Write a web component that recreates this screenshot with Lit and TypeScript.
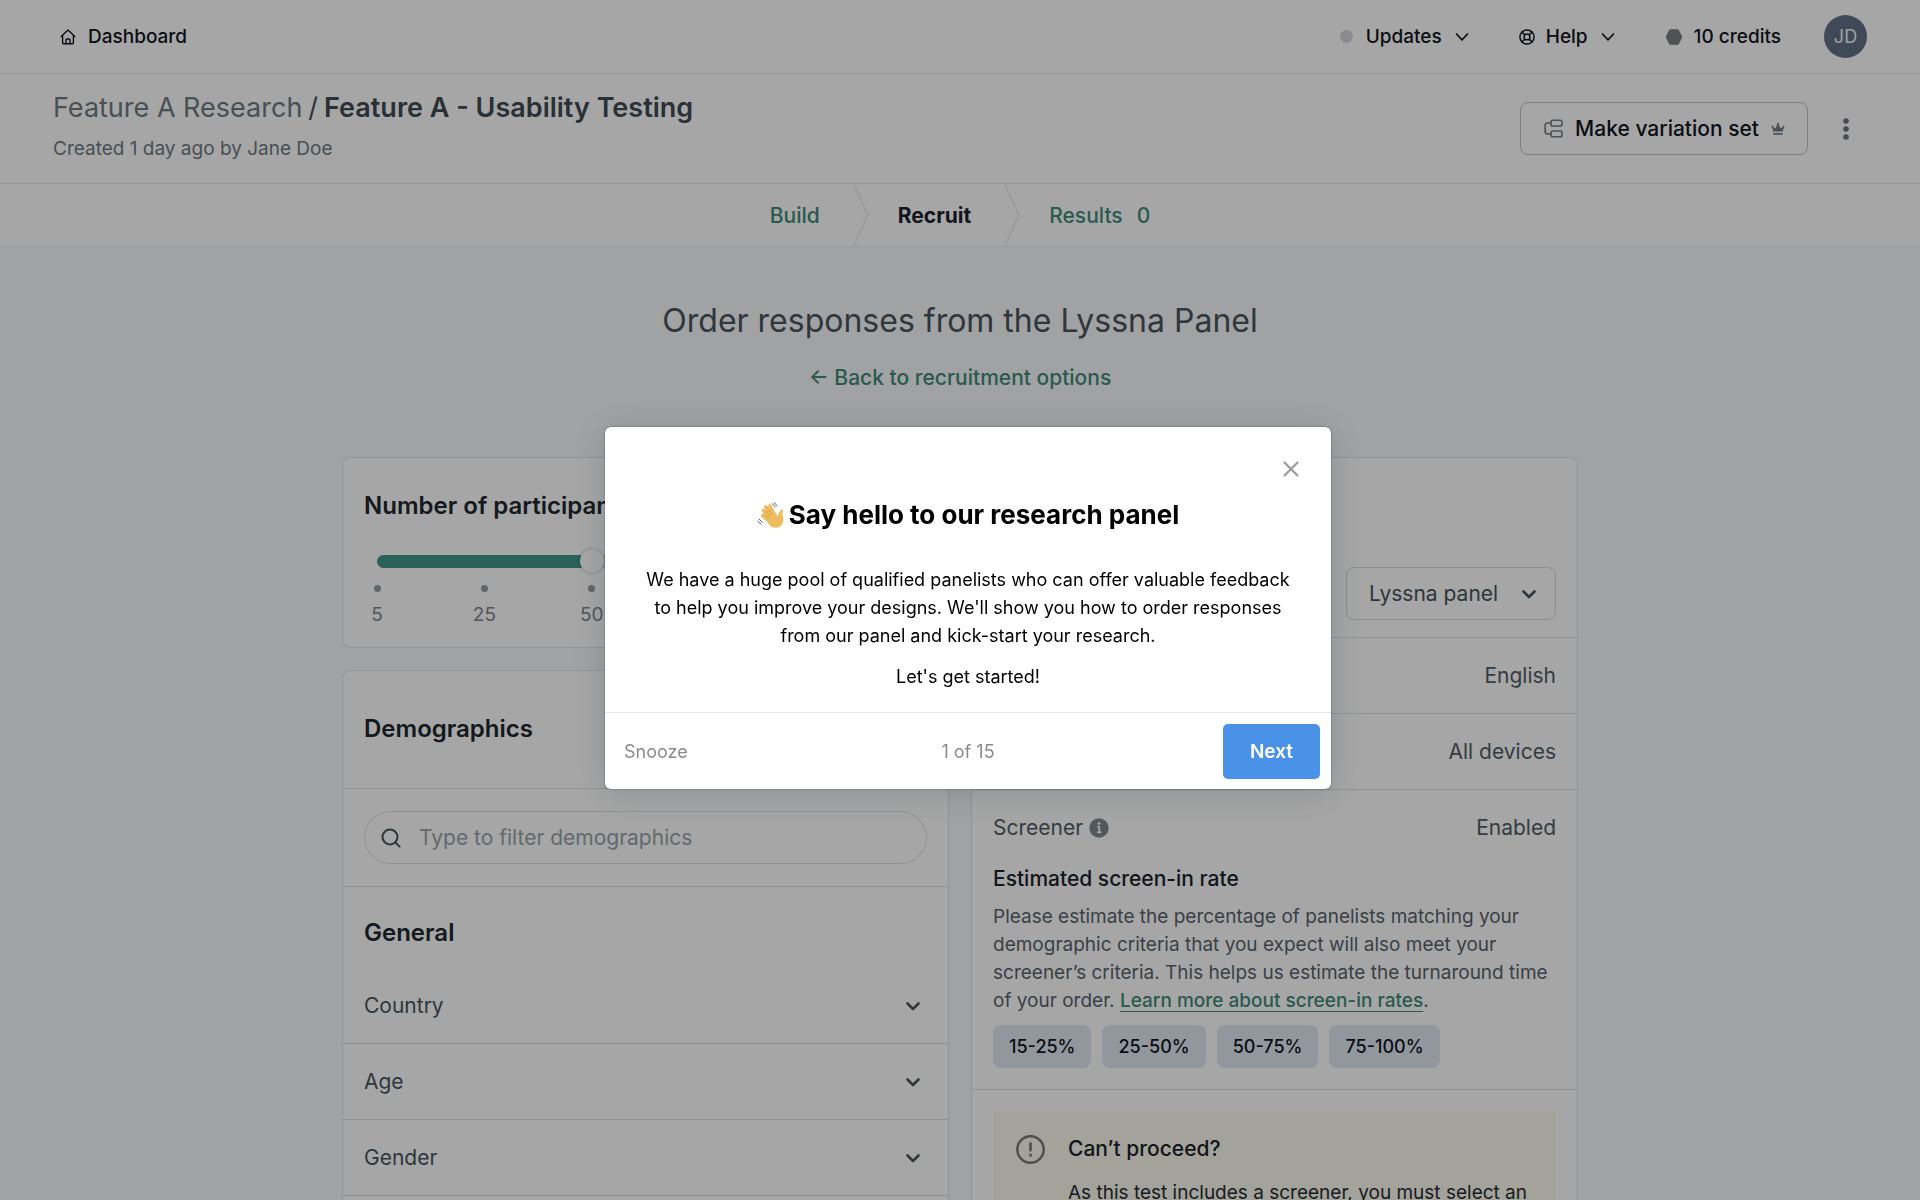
import { LitElement, html, css } from "lit";
import { customElement, state } from "lit/decorators.js";

const STOPS = ["5", "25", "50", "100", "250", "500"];
const FILTERS = ["Country", "Age", "Gender"];
const RATES = ["15-25%", "25-50%", "50-75%", "75-100%"];

const thinChevron = html`<svg class="icon" width="14" height="14" viewBox="0 0 14 14" aria-hidden="true">
  <path d="M1.5 4 7 9.8 12.5 4" stroke-width="1.7" />
</svg>`;

const boldChevron = html`<svg class="icon chevron" width="28" height="28" viewBox="0 0 28 28" aria-hidden="true">
  <path d="M8.5 11.5 14 17 19.5 11.5" stroke-width="2.6" />
</svg>`;

const homeIcon = html`<svg class="icon" width="16" height="16" viewBox="0 0 16 16" aria-hidden="true">
  <path d="M1.2 7.4 8 1.1l6.8 6.3M2.6 6.4v7.4c0 .6.4 1 1 1h8.8c.6 0 1-.4 1-1V6.4M6 14.6V11c0-.6.4-1 1-1h2c.6 0 1 .4 1 1v3.6" stroke-width="1.4" />
</svg>`;

const helpIcon = html`<svg class="icon" width="16" height="16" viewBox="0 0 16 16" aria-hidden="true">
  <g stroke-width="1.5">
    <circle cx="8" cy="8" r="7.1" />
    <rect x="5.2" y="5.2" width="5.6" height="5.6" rx="1.8" />
    <path d="m3 3 2.700 2.700M13 3l-2.700 2.700M3 13l2.700-2.700M13 13l-2.700-2.700" />
  </g>
</svg>`;

const hexagonIcon = html`<svg class="hexagon" width="18" height="16" viewBox="0 0 18 16" aria-hidden="true">
  <path fill="currentColor" d="M5.6.2h6.800c.6 0 1.100.300 1.400.800l3.200 6c.3.600.3 1.300 0 1.900l-3.200 6c-.3.600-.8.900-1.400.900H5.600c-.6 0-1.100-.3-1.400-.9L1 8.900C.7 8.300.7 7.600 1 7l3.200-6c.3-.5.8-.8 1.400-.8z" />
</svg>`;

const variationIcon = html`<svg class="icon" width="19" height="19" viewBox="0 0 19 19" aria-hidden="true">
  <g stroke-width="1.6">
    <rect x="7" y="1.2" width="11" height="5.8" rx="1.8" />
    <rect x="7" y="12" width="11" height="5.8" rx="1.8" />
    <path d="M7 4H3.500C2 4 1.200 4.800 1.200 6.200v6.600c0 1.400.8 2.200 2.300 2.200H7" />
  </g>
</svg>`;

const crownIcon = html`<svg width="14" height="14" viewBox="0 0 14 14" aria-hidden="true">
  <path fill="currentColor" d="M2.300 9.600 1.100 5.200a.9.9 0 1 1 1-.4l2.200 1.600 2-3.900a1 1 0 1 1 1.400 0l2 3.900 2.200-1.600a.9.9 0 1 1 1 .4l-1.200 4.400zM2.300 11h9.400v1.700H2.300z" />
</svg>`;

const waveIcon = html`<svg width="28" height="28" viewBox="0 0 28 28" aria-hidden="true">
  <g fill="none" stroke="#efbd5f" stroke-linecap="round">
    <path stroke-width="3.6" d="M18 15 12.800 5M15.500 16.500 8.800 6M13.500 18 6.300 9.600M13 20.500 5.600 14.600" />
    <path stroke-width="3.4" d="M22.500 18.500c-.2-3.300.4-5.600 2-8.100" />
  </g>
  <path fill="#efbd5f" d="M9.500 17.500 18.600 12l2.700 3.600 4.400-2.100c1 4.200.9 8-1.200 10.600-2.500 3.200-7.700 3.400-10.800 1.200-2-1.500-3.800-4.600-4.200-7.800z" />
  <g fill="none" stroke="#cf9440" stroke-width=".7" stroke-linecap="round">
    <path d="m10.200 6.200 4.600 7.200M8 9l5 6M7.600 13.800l4.200 3.400" />
  </g>
  <g fill="none" stroke="#55606c" stroke-width="1" stroke-linecap="round">
    <path d="M15.300 2.700 18.200 6M17.200 1.500l3 3.500M2.300 18.300l3 3.100M.9 20.300 4 23.200" />
  </g>
</svg>`;

const tabDivider = html`<svg class="tab-divider" width="16" viewBox="0 0 16 62" preserveAspectRatio="none" aria-hidden="true">
  <path d="M.5 0 15 31 .5 62" />
</svg>`;

@customElement("app-root")
export class AppRoot extends LitElement {
  static styles = css`
    :host {
      display: flex;
      flex-direction: column;
      height: 100vh;
      overflow: hidden;
      background: #f7f9fb;
      color: #10151c;
      font: 400 19px/28px Inter, "Liberation Sans", sans-serif;
    }
    * { box-sizing: border-box; }
    h1, h2, h3, p { margin: 0; }
    a { color: inherit; text-decoration: none; }
    button, input, select { font: inherit; color: inherit; margin: 0; }
    button { border: 0; background: none; padding: 0; cursor: pointer; white-space: nowrap; }
    svg { display: block; flex: none; }
    .icon { fill: none; stroke: currentColor; stroke-linecap: round; stroke-linejoin: round; }

    .topbar {
      display: flex;
      align-items: center;
      justify-content: space-between;
      flex: none;
      height: 74px;
      padding: 0 53px 0 60px;
      background: #fff;
      border-bottom: 1px solid #e2e6e9;
      font-weight: 500;
    }
    .home { display: flex; align-items: center; gap: 12px; }
    .menu { display: flex; align-items: center; gap: 50px; }
    .menu-item { display: flex; align-items: center; gap: 11px; }
    .label { display: flex; align-items: center; gap: 13px; }
    .dot { width: 13px; height: 13px; border-radius: 50%; background: #d3d6da; }
    .account { display: flex; align-items: center; gap: 43px; }
    .hexagon { color: #7d7f83; }
    .avatar {
      width: 43px;
      height: 43px;
      border-radius: 50%;
      background: #627088;
      color: #f2f5f8;
      font-size: 18px;
      font-weight: 400;
    }

    .title-bar {
      display: flex;
      align-items: center;
      justify-content: space-between;
      flex: none;
      padding: 16px 53px 20px;
      background: #fff;
      border-bottom: 1px solid #dfe3e6;
    }
    .crumbs {
      display: flex;
      gap: 6px;
      margin-bottom: 9px;
      font-size: 27px;
      line-height: 36px;
      font-weight: 400;
      color: #6f7a83;
    }
    .crumbs .slash { color: #444e57; }
    .crumbs strong { font-weight: 600; color: #414b54; }
    .created { color: #6f7a83; }
    .actions { display: flex; align-items: center; gap: 16px; padding-top: 4px; }
    .variation {
      display: flex;
      align-items: center;
      gap: 12px;
      height: 53px;
      padding: 0 22px 0 23px;
      border: 1px solid #bdc5c9;
      border-radius: 8px;
      font-size: 21px;
      font-weight: 500;
    }
    .variation svg { color: #737d86; }
    .kebab { display: grid; place-items: center; width: 43px; height: 43px; color: #6b737b; }

    .tabs {
      display: flex;
      align-items: center;
      justify-content: center;
      flex: none;
      height: 63px;
      background: #fff;
      border-bottom: 1px solid #eceff2;
      font-size: 21px;
      font-weight: 500;
      color: #3f8a78;
    }
    .tabs a { padding-top: 2px; }
    .tabs .current { font-weight: 700; color: #1b222b; }
    .tab-divider { height: 100%; margin: 0 29px 0 33px; fill: none; stroke: #eef0f2; stroke-width: 2; }
    .count { margin-left: 14px; }

    main { flex: 1; display: flex; flex-direction: column; min-height: 0; padding: 56px 24px 0; }
    h1 {
      font-size: 32px;
      line-height: 36px;
      font-weight: 400;
      text-align: center;
      color: #4a545d;
    }
    .back {
      align-self: center;
      margin: 25px 0 65px;
      font-size: 21px;
      font-weight: 500;
      color: #3f8a78;
    }
    .columns {
      display: grid;
      grid-template-columns: 1fr 1fr;
      gap: 22px;
      width: 100%;
      max-width: 1236px;
      margin: 0 auto;
    }
    .column { display: flex; flex-direction: column; gap: 22px; min-width: 0; }
    .card { background: #fff; border: 1px solid #dfe4e8; border-radius: 8px; }
    .card.fill { flex: 1; }
    h2 { font-size: 24px; line-height: 36px; font-weight: 600; color: #20272f; }

    .participants { padding: 30px 21px 18px; }
    .slider { display: grid; align-items: center; margin: 25px 0 12px; }
    .slider > * { grid-area: 1 / 1; }
    .track { height: 13px; margin: 0 13px; border-radius: 7px; background: #dfe5ea; overflow: hidden; }
    .track-fill { height: 100%; background: #41968a; }
    .range {
      appearance: none;
      height: 24px;
      margin: 0 1px;
      background: none;
    }
    .range::-webkit-slider-thumb {
      appearance: none;
      width: 24px;
      height: 24px;
      border-radius: 50%;
      background: #fff;
      box-shadow: 0 0 3px rgba(30, 40, 50, 0.35);
    }
    .stops { display: flex; justify-content: space-between; color: #7b858d; }
    .stop { display: flex; flex-direction: column; align-items: center; gap: 9px; width: 26px; }
    .stop::before { content: ""; width: 7px; height: 7px; border-radius: 50%; background: #959da3; }

    .card-head { padding: 40px 21px 41px; border-bottom: 1px solid #dde2e6; }
    .filter { padding: 22px 21px; border-bottom: 1px solid #dde2e6; }
    .search {
      display: flex;
      align-items: center;
      gap: 18px;
      height: 53px;
      padding: 0 16px;
      border: 1px solid #dbe1e4;
      border-radius: 27px;
      color: #49535c;
    }
    .search input { flex: 1; min-width: 0; border: 0; padding: 0; outline: 0; background: none; font-size: 21px; }
    .search input::placeholder { color: #98a2a7; opacity: 1; }
    .group-title { padding: 28px 21px 17px; }
    .filter-row {
      display: flex;
      align-items: center;
      justify-content: space-between;
      width: 100%;
      height: 76px;
      padding: 0 21px;
      border-bottom: 1px solid #d8dde1;
      font-size: 21px;
      color: #49535c;
    }

    .source { display: flex; justify-content: flex-end; padding: 109px 21px 17px; border-bottom: 1px solid #dde2e6; }
    .select { display: grid; align-items: center; color: #49535c; }
    .select > * { grid-area: 1 / 1; }
    .select select {
      appearance: none;
      height: 53px;
      padding: 0 56px 0 22px;
      border: 1px solid #d5dbdf;
      border-radius: 8px;
      background: #fff;
      font-size: 21px;
    }
    .select .chevron { justify-self: end; margin-right: 13px; pointer-events: none; }
    .setting {
      display: flex;
      align-items: center;
      justify-content: flex-end;
      height: 76px;
      padding: 0 21px;
      border-bottom: 1px solid #dde2e6;
      font-size: 21px;
      color: #525c65;
    }
    .setting.open { justify-content: space-between; height: 75px; border-bottom: 0; }
    .term { display: flex; align-items: center; gap: 6px; }
    .term svg { color: #7f8990; }
    .rate { padding: 0 21px 21px; border-bottom: 1px solid #dde2e6; }
    h3 { font-size: 21px; line-height: 28px; font-weight: 500; color: #1b222b; }
    .rate p { margin: 10px 0; color: #59636c; }
    .rate a { font-weight: 500; color: #3f8a78; text-decoration: underline; text-underline-offset: 4px; }
    .chips { display: flex; gap: 11px; }
    .chip {
      height: 43px;
      padding: 0 16px;
      border-radius: 8px;
      background: #e1e8f1;
      font-size: 18px;
      font-weight: 500;
    }
    .warning {
      display: flex;
      align-items: flex-start;
      gap: 23px;
      margin: 22px 21px;
      padding: 23px;
      background: #faf9ee;
    }
    .warning svg { color: #787a78; }
    .warning p { margin-top: 16px; color: #262d34; }

    .overlay {
      position: fixed;
      inset: 0;
      display: flex;
      align-items: center;
      justify-content: center;
      padding: 16px 0 0 16px;
      background: rgba(0, 0, 0, 0.35);
    }
    .dialog {
      position: relative;
      width: 100%;
      max-width: 726px;
      border-radius: 6px;
      background: #fff;
      color: #000;
      font-size: 18px;
      box-shadow: 0 0 2px rgba(0, 0, 0, 0.4), 0 4px 36px rgba(36, 46, 66, 0.2);
    }
    .close {
      position: absolute;
      top: 26px;
      right: 24px;
      display: grid;
      place-items: center;
      width: 32px;
      height: 32px;
      color: #9b9b9b;
    }
    .dialog-body { padding: 70px 40px 21px; text-align: center; }
    .dialog-title {
      display: flex;
      align-items: center;
      justify-content: center;
      gap: 4px;
      margin-bottom: 33px;
      font-size: 26px;
      font-weight: 700;
      color: #000;
    }
    .dialog-body p + p { margin-top: 13px; }
    .dialog-foot {
      display: grid;
      grid-template-columns: 1fr auto 1fr;
      align-items: center;
      padding: 11px 11px 10px;
      border-top: 1px solid #e8e8e8;
      color: #8b8b8b;
    }
    .snooze { justify-self: start; padding: 0 8px; }
    .next {
      justify-self: end;
      height: 55px;
      padding: 0 27px;
      border-radius: 5px;
      background: #4a92e8;
      color: #fff;
      font-size: 19px;
      font-weight: 600;
    }
  `;

  @state() private stop = 2;
  @state() private tourOpen = true;

  private onSlide(e: Event) {
    this.stop = Number((e.target as HTMLInputElement).value);
  }

  private closeTour() {
    this.tourOpen = false;
  }

  private renderTop() {
    return html`
      <header class="topbar">
        <a class="home" href="#dashboard">${homeIcon}Dashboard</a>
        <nav class="menu" aria-label="Account">
          <button class="label"><span class="dot"></span>Updates${thinChevron}</button>
          <button class="menu-item">${helpIcon}<span class="label">Help${thinChevron}</span></button>
          <div class="account">
            <a class="menu-item" href="#credits">${hexagonIcon}10 credits</a>
            <button class="avatar" aria-label="Account menu">JD</button>
          </div>
        </nav>
      </header>
      <div class="title-bar">
        <div>
          <div class="crumbs">
            <a href="#project">Feature A Research</a><span class="slash">/</span><strong>Feature A - Usability Testing</strong>
          </div>
          <p class="created">Created 1 day ago by Jane Doe</p>
        </div>
        <div class="actions">
          <button class="variation">${variationIcon}Make variation set${crownIcon}</button>
          <button class="kebab" aria-label="More actions">
            <svg width="6" height="22" viewBox="0 0 6 22" aria-hidden="true">
              <g fill="currentColor">
                <circle cx="3" cy="3" r="2.8" /><circle cx="3" cy="11" r="2.8" /><circle cx="3" cy="19" r="2.8" />
              </g>
            </svg>
          </button>
        </div>
      </div>
      <nav class="tabs" aria-label="Test steps">
        <a href="#build">Build</a>${tabDivider}
        <a class="current" href="#recruit" aria-current="page">Recruit</a>${tabDivider}
        <a href="#results">Results<span class="count">0</span></a>
      </nav>
    `;
  }

  private renderLeft() {
    const percent = (this.stop / (STOPS.length - 1)) * 100;
    return html`
      <div class="column">
        <section class="card participants">
          <h2><label for="participants">Number of participants</label></h2>
          <div class="slider">
            <div class="track"><div class="track-fill" style="width:${percent}%"></div></div>
            <input id="participants" class="range" type="range" min="0" max=${STOPS.length - 1} step="1"
              .value=${String(this.stop)} @input=${this.onSlide} />
          </div>
          <div class="stops" aria-hidden="true">${STOPS.map((s) => html`<span class="stop">${s}</span>`)}</div>
        </section>
        <section class="card fill">
          <div class="card-head"><h2>Demographics</h2></div>
          <div class="filter">
            <label class="search">
              <svg class="icon" width="20" height="20" viewBox="0 0 20 20" aria-hidden="true">
                <g stroke-width="2"><circle cx="9" cy="9" r="7.5" /><path d="m14.600 14.600 4 4" /></g>
              </svg>
              <input type="text" placeholder="Type to filter demographics" aria-label="Type to filter demographics" />
            </label>
          </div>
          <h2 class="group-title">General</h2>
          ${FILTERS.map((f) => html`<button class="filter-row" aria-expanded="false">${f}${boldChevron}</button>`)}
        </section>
      </div>
    `;
  }

  private renderRight() {
    return html`
      <div class="column">
        <section class="card fill">
          <div class="source">
            <div class="select">
              <select aria-label="Participant source"><option>Lyssna panel</option></select>
              ${boldChevron}
            </div>
          </div>
          <div class="setting">English</div>
          <div class="setting">All devices</div>
          <div class="setting open">
            <span class="term">
              Screener
              <svg width="20" height="20" viewBox="0 0 20 20" aria-hidden="true">
                <circle cx="10" cy="10" r="9.7" fill="currentColor" />
                <path d="M8.300 8.800H10.300V14M8 14.300h4.400" fill="none" stroke="#fff" stroke-width="1.8" />
                <circle cx="10" cy="5.6" r="1.4" fill="#fff" />
              </svg>
            </span>
            <span>Enabled</span>
          </div>
          <div class="rate">
            <h3>Estimated screen-in rate</h3>
            <p>
              Please estimate the percentage of panelists matching your demographic criteria that you expect will also
              meet your screener’s criteria. This helps us estimate the turnaround time of your order.
              <a href="#screen-in-rates">Learn more about screen-in rates</a>.
            </p>
            <div class="chips">${RATES.map((r) => html`<button class="chip">${r}</button>`)}</div>
          </div>
          <div class="warning">
            <svg class="icon" width="29" height="29" viewBox="0 0 29 29" aria-hidden="true">
              <circle cx="14.5" cy="14.5" r="13.2" stroke-width="2.5" />
              <path d="M14.500 8.500v6.800" stroke-width="2.6" />
              <circle cx="14.5" cy="20.2" r=".6" stroke-width="2" />
            </svg>
            <div>
              <h3>Can’t proceed?</h3>
              <p>As this test includes a screener, you must select an estimated screen-in rate.</p>
            </div>
          </div>
        </section>
      </div>
    `;
  }

  private renderTour() {
    return html`
      <div class="overlay">
        <div class="dialog" role="dialog" aria-modal="true" aria-labelledby="tour-title">
          <button class="close" aria-label="Close" @click=${this.closeTour}>
            <svg class="icon" width="16" height="16" viewBox="0 0 16 16" aria-hidden="true">
              <path d="m1.500 1.500 13 13M14.500 1.500l-13 13" stroke-width="2.2" />
            </svg>
          </button>
          <div class="dialog-body">
            <h2 class="dialog-title" id="tour-title">${waveIcon}Say hello to our research panel</h2>
            <p>
              We have a huge pool of qualified panelists who can offer valuable feedback to help you improve your
              designs. We'll show you how to order responses from our panel and kick-start your research.
            </p>
            <p>Let's get started!</p>
          </div>
          <div class="dialog-foot">
            <button class="snooze" @click=${this.closeTour}>Snooze</button>
            <span>1 of 15</span>
            <button class="next">Next</button>
          </div>
        </div>
      </div>
    `;
  }

  render() {
    return html`
      ${this.renderTop()}
      <main>
        <h1>Order responses from the Lyssna Panel</h1>
        <a class="back" href="#recruitment">← Back to recruitment options</a>
        <div class="columns">${this.renderLeft()}${this.renderRight()}</div>
      </main>
      ${this.tourOpen ? this.renderTour() : null}
    `;
  }
}
